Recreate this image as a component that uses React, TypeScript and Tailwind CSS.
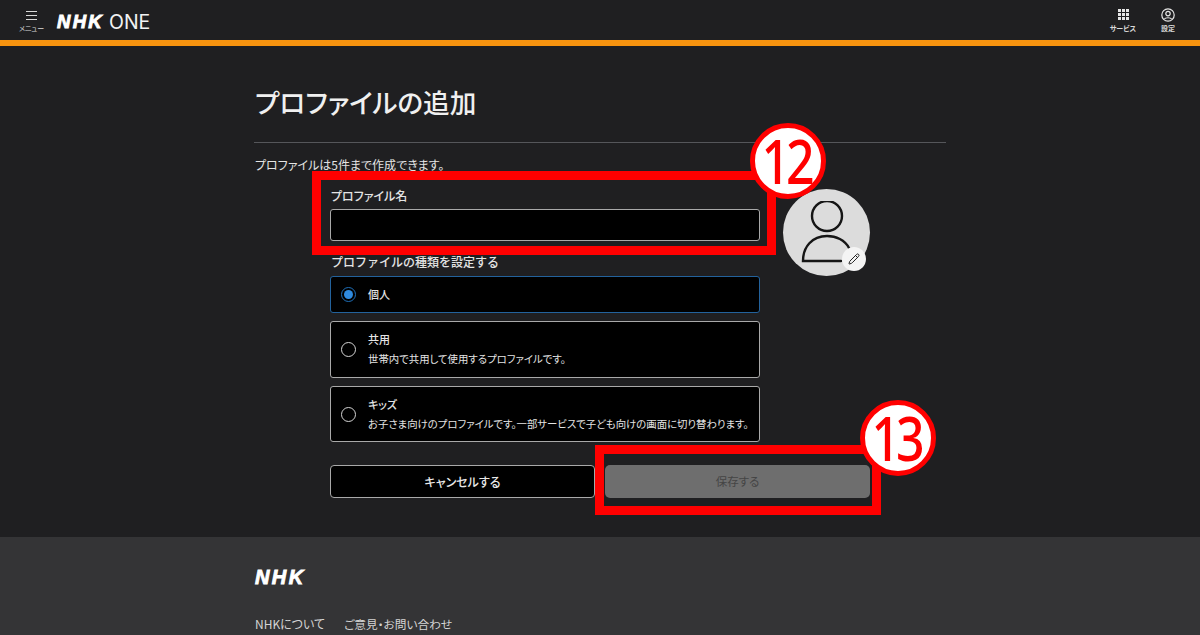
import { Pencil } from "lucide-react";

function NhkMark({ className }: { className: string }) {
  return (
    <span className={`font-['Liberation_Sans',Arial,sans-serif] font-black italic [-webkit-text-stroke:0.9px_currentColor] ${className}`}>
      NHK
    </span>
  );
}

function Radio({ checked }: { checked?: boolean }) {
  return (
    <span
      className={`flex h-[15px] w-[15px] shrink-0 items-center justify-center rounded-full border ${
        checked ? "border-[#1f6fb8]" : "border-[#d5d5d5]"
      }`}
    >
      {checked && <span className="h-[9px] w-[9px] rounded-full bg-[#2f8be0]" />}
    </span>
  );
}

function OptionCard({ title, note, checked, className }: { title: string; note?: string; checked?: boolean; className: string }) {
  return (
    <div
      className={`flex items-center gap-[12px] rounded-[3px] border bg-black pl-[10px] ${
        checked ? "border-[#23629c]" : "border-[#a9a9a9]"
      } ${className}`}
    >
      <Radio checked={checked} />
      <div className="pb-[2px] text-[#e4e4e4]">
        <p className="text-[11px] leading-[16px] font-medium">{title}</p>
        {note && <p className="mt-[4px] text-[10.4px] leading-[15px] whitespace-nowrap">{note}</p>}
      </div>
    </div>
  );
}

function Callout({ label, className }: { label: string; className: string }) {
  return (
    <div
      className={`absolute flex h-[76px] w-[76px] items-center justify-center rounded-full border-[5px] border-[#ff0000] bg-white font-['Noto_Sans',sans-serif] text-[50px] font-medium tracking-[-4px] text-[#ff0000] ${className}`}
    >
      <span className="scale-y-[1.22] pr-1">{label}</span>
    </div>
  );
}

export default function App() {
  return (
    <div className="relative h-[635px] w-[1200px] overflow-hidden bg-[#1f1f21] font-['Noto_Sans_CJK_JP','Noto_Sans',sans-serif] text-white [font-feature-settings:'palt']">
      <header className="flex h-[46px] items-start justify-between border-b-[6px] border-[#f7930f]">
        <div className="flex items-center">
          <div className="ml-[18px] flex w-[27px] flex-col items-center pt-[10px]">
            <svg width="11" height="11" viewBox="0 0 11 11" stroke="#d8d8d8" strokeWidth="1">
              <path d="M0 1.5h11M0 5.5h11M0 9.5h11" />
            </svg>
            <span className="mt-[3px] text-[7px] leading-[9px] text-[#d8d8d8] whitespace-nowrap">メニュー</span>
          </div>
          <div className="ml-[12px] flex items-center pt-[11px]">
            <NhkMark className="text-[18.5px] leading-[18px] tracking-[2.3px] text-white" />
            <span className="ml-[5px] font-['Inter',sans-serif] text-[19.5px] leading-[18px] text-[#f2f2f2]">ONE</span>
          </div>
        </div>
        <div className="flex items-start pt-[8px] pr-[24px]">
          <div className="flex w-[30px] flex-col items-center pt-px">
            <svg width="11" height="11" viewBox="0 0 11 11" fill="#e6e6e6">
              {[0, 4, 8].map((y) =>
                [0, 4, 8].map((x) => <rect key={`${x}-${y}`} x={x} y={y} width="3" height="3" />)
              )}
            </svg>
            <span className="mt-[4px] text-[7px] leading-[9px] font-bold text-[#d8d8d8] whitespace-nowrap">サービス</span>
          </div>
          <div className="ml-[22px] flex w-[16px] flex-col items-center">
            <svg width="14" height="14" viewBox="0 0 14 14" fill="none" stroke="#e6e6e6" strokeWidth="1.2">
              <circle cx="7" cy="7" r="6.2" />
              <circle cx="7" cy="5.6" r="2.2" />
              <path d="M3.4 11c.9-1.7 6.3-1.7 7.2 0" />
            </svg>
            <span className="mt-[2px] text-[7px] leading-[9px] font-bold text-[#d8d8d8] whitespace-nowrap">設定</span>
          </div>
        </div>
      </header>

      <main className="mx-auto h-[491px] w-[692px] pt-[37px]">
        <h1 className="pl-px text-[26.6px] leading-[38px] font-medium text-[#f0f0f0]">プロファイルの追加</h1>
        <div className="mt-[21px] h-px bg-[#55565a]" />
        <p className="mt-[14px] pl-px text-[12px] leading-[16px] text-[#e4e4e4]">プロファイルは5件まで作成できます。</p>

        <div className="mt-[15px] ml-[76px] flex items-start">
          <div className="w-[430px]">
            <p className="pl-px text-[12px] leading-[16px] font-medium text-[#e4e4e4]">プロファイル名</p>
            <div className="mt-[5px] h-[32px] rounded-[3px] border border-[#a9a9a9] bg-black" />
            <p className="mt-[13px] pl-px text-[12px] leading-[16px] font-medium text-[#e4e4e4] [font-feature-settings:normal]">
              プロファイルの種類を設定する
            </p>
            <div className="mt-[6px] flex flex-col gap-[8px]">
              <OptionCard title="個人" checked className="h-[37px]" />
              <OptionCard title="共用" note="世帯内で共用して使用するプロファイルです。" className="h-[57px]" />
              <OptionCard
                title="キッズ"
                note="お子さま向けのプロファイルです。一部サービスで子ども向けの画面に切り替わります。"
                className="h-[56px]"
              />
            </div>
            <div className="mt-[23px] flex w-[540px] gap-[10px]">
              <button className="h-[33px] w-[265px] rounded-[4px] border border-[#a9a9a9] bg-black text-[12px] font-medium text-[#e8e8e8]">
                キャンセルする
              </button>
              <button className="h-[33px] w-[265px] rounded-[5px] bg-[#6e6e6e] text-[11.5px] text-[#454545]">
                保存する
              </button>
            </div>
          </div>

          <div className="relative mt-px ml-[23px] flex h-[87px] w-[87px] shrink-0 items-center justify-center rounded-full bg-[#dcdcdc]">
            <svg width="52" height="64" viewBox="0 0 52 64" fill="none" stroke="#151515" strokeWidth="2.4">
              <circle cx="26" cy="15" r="15" />
              <path d="M48 47C44 39 35 35 26 35 11 35 2 46 2 60H40" strokeLinecap="round" />
            </svg>
            <span className="absolute right-[4px] bottom-[5px] flex h-[24px] w-[24px] items-center justify-center rounded-full bg-[#f4f4f4]">
              <Pencil size={12} color="#222" strokeWidth={2} />
            </span>
          </div>
        </div>
      </main>

      <footer className="h-[98px] bg-[#343436] pt-[31px]">
        <div className="mx-auto w-[692px] pl-px">
          <NhkMark className="block text-[20px] leading-[18px] tracking-[2.4px] text-white" />
          <div className="mt-[29px] flex gap-[19px] text-[12px] leading-[18px] text-[#d4d4d4]">
            <span>NHKについて</span>
            <span className="text-[11.7px]">ご意見・お問い合わせ</span>
          </div>
        </div>
      </footer>

      {/* red annotations painted on top of the screenshot */}
      <div className="absolute top-[171px] left-[312px] h-[84px] w-[464px] border-[9px] border-[#ff0000]" />
      <div className="absolute top-[445px] left-[595px] h-[70px] w-[286px] border-[9px] border-[#ff0000]" />
      <Callout label="12" className="top-[123px] left-[750px]" />
      <Callout label="13" className="top-[400px] left-[860px]" />
    </div>
  );
}
